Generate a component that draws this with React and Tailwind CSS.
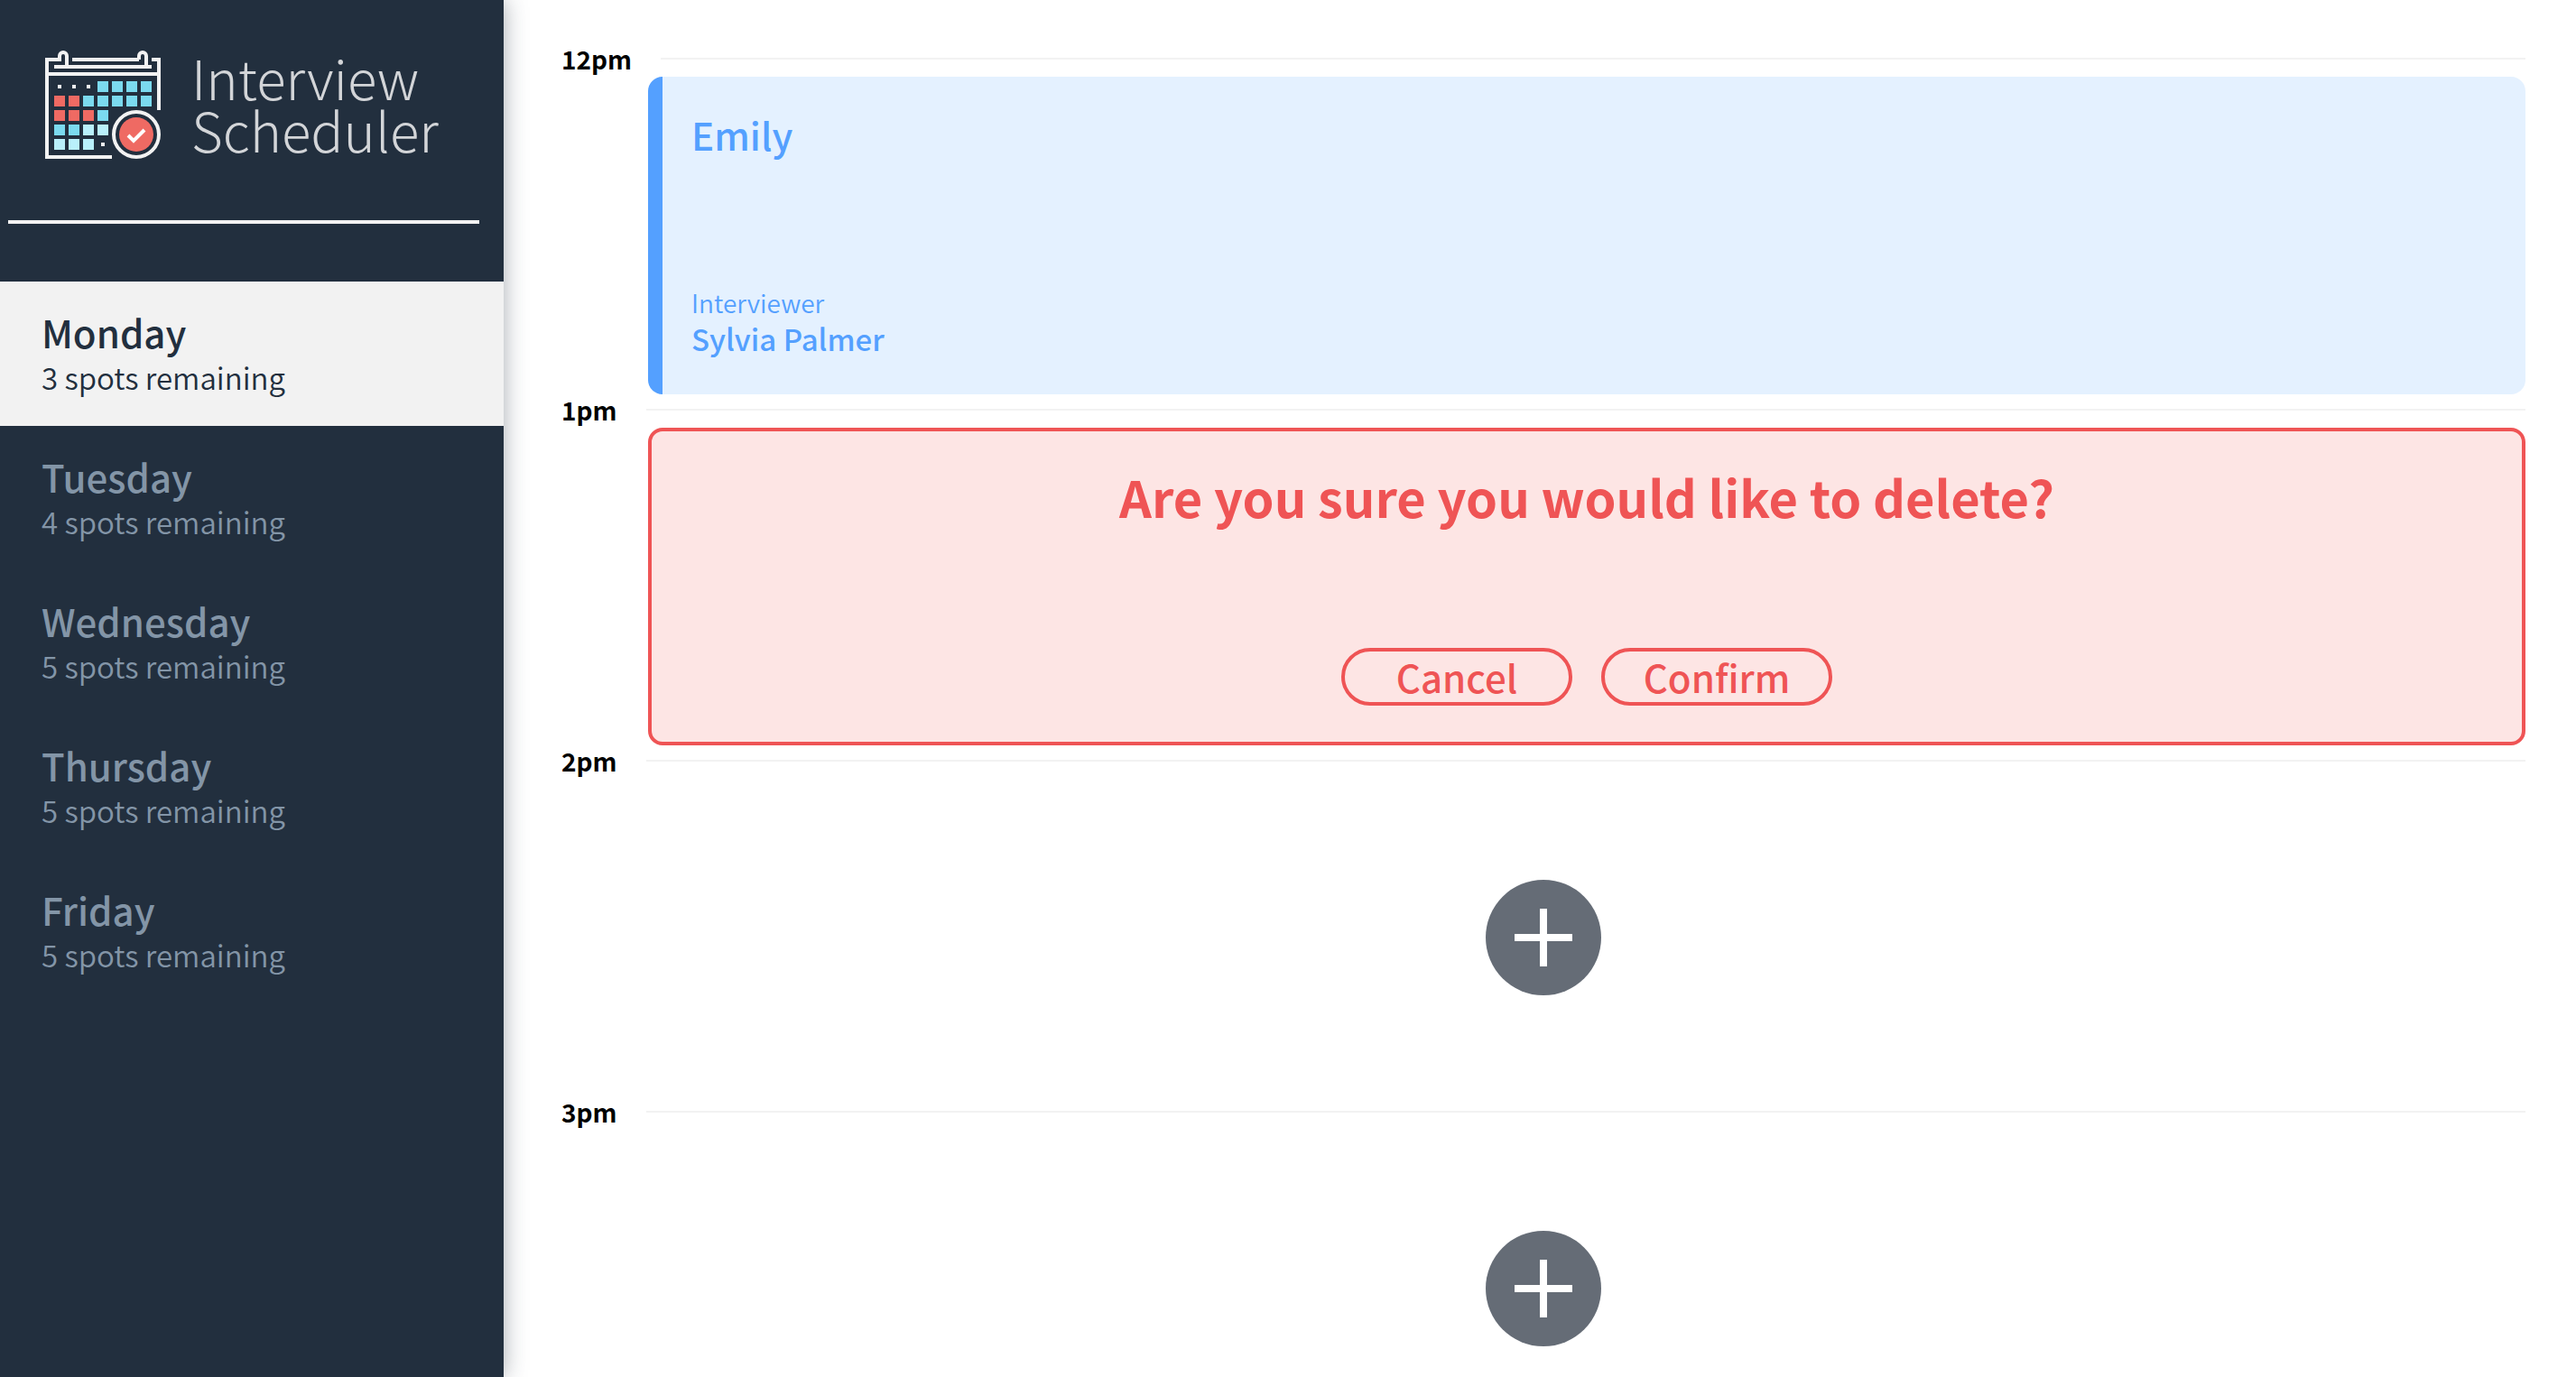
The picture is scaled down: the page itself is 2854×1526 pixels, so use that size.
const days = [
  { name: "Monday", spots: 3, selected: true },
  { name: "Tuesday", spots: 4 },
  { name: "Wednesday", spots: 5 },
  { name: "Thursday", spots: 5 },
  { name: "Friday", spots: 5 },
];

const BLUE = "#7bdaef";
const PALE = "#b9f0fb";
const RED = "#ef6a63";

// One entry per calendar cell: [column, row, colour]
const cells = [
  [3, 0, BLUE], [4, 0, BLUE], [5, 0, BLUE], [6, 0, BLUE],
  [0, 1, RED], [1, 1, RED], [2, 1, BLUE], [3, 1, BLUE], [4, 1, BLUE], [5, 1, BLUE], [6, 1, BLUE],
  [0, 2, RED], [1, 2, RED], [2, 2, RED], [3, 2, BLUE],
  [0, 3, BLUE], [1, 3, BLUE], [2, 3, PALE], [3, 3, PALE],
  [0, 4, PALE], [1, 4, PALE], [2, 4, PALE],
];
const dots = [[0, 0], [1, 0], [2, 0], [3, 4]];

function CalendarIcon() {
  return (
    <svg className="h-30 w-32 shrink-0" viewBox="0 0 128 120" fill="none" aria-hidden="true">
      <g stroke="#f2f2f2" strokeWidth="4">
        <path d="M74 118H2V10H18" />
        <path d="M30 10H104" />
        <path d="M118 10H126V66" />
        <path d="M2 26H126" />
        <path d="M10 18H118" />
        <path d="M16 10V6a4 4 0 0 1 8 0V18" />
        <path d="M104 10V6a4 4 0 0 1 8 0V18" />
        <circle cx="101" cy="93" r="25" />
      </g>
      {cells.map(([c, r, fill]) => (
        <rect key={`${c}-${r}`} x={10 + c * 16} y={34 + r * 16} width="12" height="12" fill={fill} />
      ))}
      {dots.map(([c, r]) => (
        <rect key={`${c}-${r}`} x={14 + c * 16} y={38 + r * 16} width="4" height="4" fill="#f2f2f2" />
      ))}
      <circle cx="101" cy="93" r="19" fill={RED} />
      <path d="M92 94L98 100L110 88" stroke="#fff" strokeWidth="4" />
    </svg>
  );
}

function DayItem({ name, spots, selected }) {
  return (
    <li>
      <button
        type="button"
        className={
          selected
            ? "block w-full bg-[#f2f2f2] pt-8 pb-7 pl-[46px] text-left text-[#222f3e]"
            : "block w-full pt-8 pb-7 pl-[46px] text-left text-[#8395a7]"
        }
      >
        <span className="block text-[42px] leading-[48px] font-medium">{name}</span>
        <span className="block text-[33px] leading-[52px] font-[350]">{spots} spots remaining</span>
      </button>
    </li>
  );
}

function Slot({ time, children }) {
  return (
    <article>
      <header className="mb-[3px] flex items-center gap-8">
        <h4 className="text-[28px] leading-[34px] font-bold text-black">{time}</h4>
        <hr className="h-0.5 flex-1 border-0 bg-[#f2f2f2]" />
      </header>
      {children}
    </article>
  );
}

function Appointment({ student, interviewer }) {
  return (
    <section className="ml-24 flex h-[352px] flex-col justify-between rounded-2xl border-l-16 border-[#54a0ff] bg-[#e4f1ff] px-8 pt-8 pb-10 text-[#54a0ff]">
      <h2 className="text-[42px] leading-[64px] font-medium">{student}</h2>
      <div>
        <h4 className="text-[28px] leading-[36px] font-[350]">Interviewer</h4>
        <h3 className="text-[33px] leading-[44px] font-medium">{interviewer}</h3>
      </div>
    </section>
  );
}

function OutlineButton({ children }) {
  return (
    <button
      type="button"
      className="flex h-16 w-64 items-center justify-center rounded-full border-4 border-[#ef5455] text-[42px] leading-[56px] font-medium"
    >
      {children}
    </button>
  );
}

function Confirm({ message }) {
  return (
    <section className="ml-24 flex h-[352px] flex-col items-center justify-between rounded-2xl border-4 border-[#ef5455] bg-[#fde5e4] pt-9 pb-10 text-[#ef5455]">
      <h1 className="text-[56px] leading-[72px] font-bold">{message}</h1>
      <div className="flex gap-8">
        <OutlineButton>Cancel</OutlineButton>
        <OutlineButton>Confirm</OutlineButton>
      </div>
    </section>
  );
}

function Empty() {
  return (
    <div className="flex h-[352px] items-center justify-center">
      <button type="button" aria-label="Add" className="flex size-32 items-center justify-center rounded-full bg-[#656c76]">
        <svg className="size-16" viewBox="0 0 64 64" fill="none" stroke="#fff" strokeWidth="8" aria-hidden="true">
          <path d="M32 0V64M0 32H64" />
        </svg>
      </button>
    </div>
  );
}

export default function App() {
  return (
    <div className="flex h-screen overflow-hidden bg-white font-['Noto_Sans_CJK_SC',sans-serif]">
      <aside className="w-[558px] shrink-0 bg-[#222f3e] pt-14 shadow-[0_0_24px_rgba(34,47,62,0.4)]">
        <div className="flex gap-[34px] pl-[50px]">
          <CalendarIcon />
          <p className="text-[60px] leading-[58px] font-light text-[#d3d5d8]">
            Interview
            <br />
            Scheduler
          </p>
        </div>
        <hr className="mt-[68px] mr-[27px] ml-[9px] h-1 border-0 bg-[#f2f2f2]" />
        <nav className="mt-16">
          <ul>
            {days.map((d) => (
              <DayItem key={d.name} {...d} />
            ))}
          </ul>
        </nav>
      </aside>
      <main className="min-w-0 flex-1 pt-12 pr-14 pl-16">
        <Slot time="12pm">
          <Appointment student="Emily" interviewer="Sylvia Palmer" />
        </Slot>
        <Slot time="1pm">
          <Confirm message="Are you sure you would like to delete?" />
        </Slot>
        <Slot time="2pm">
          <Empty />
        </Slot>
        <Slot time="3pm">
          <Empty />
        </Slot>
      </main>
    </div>
  );
}
